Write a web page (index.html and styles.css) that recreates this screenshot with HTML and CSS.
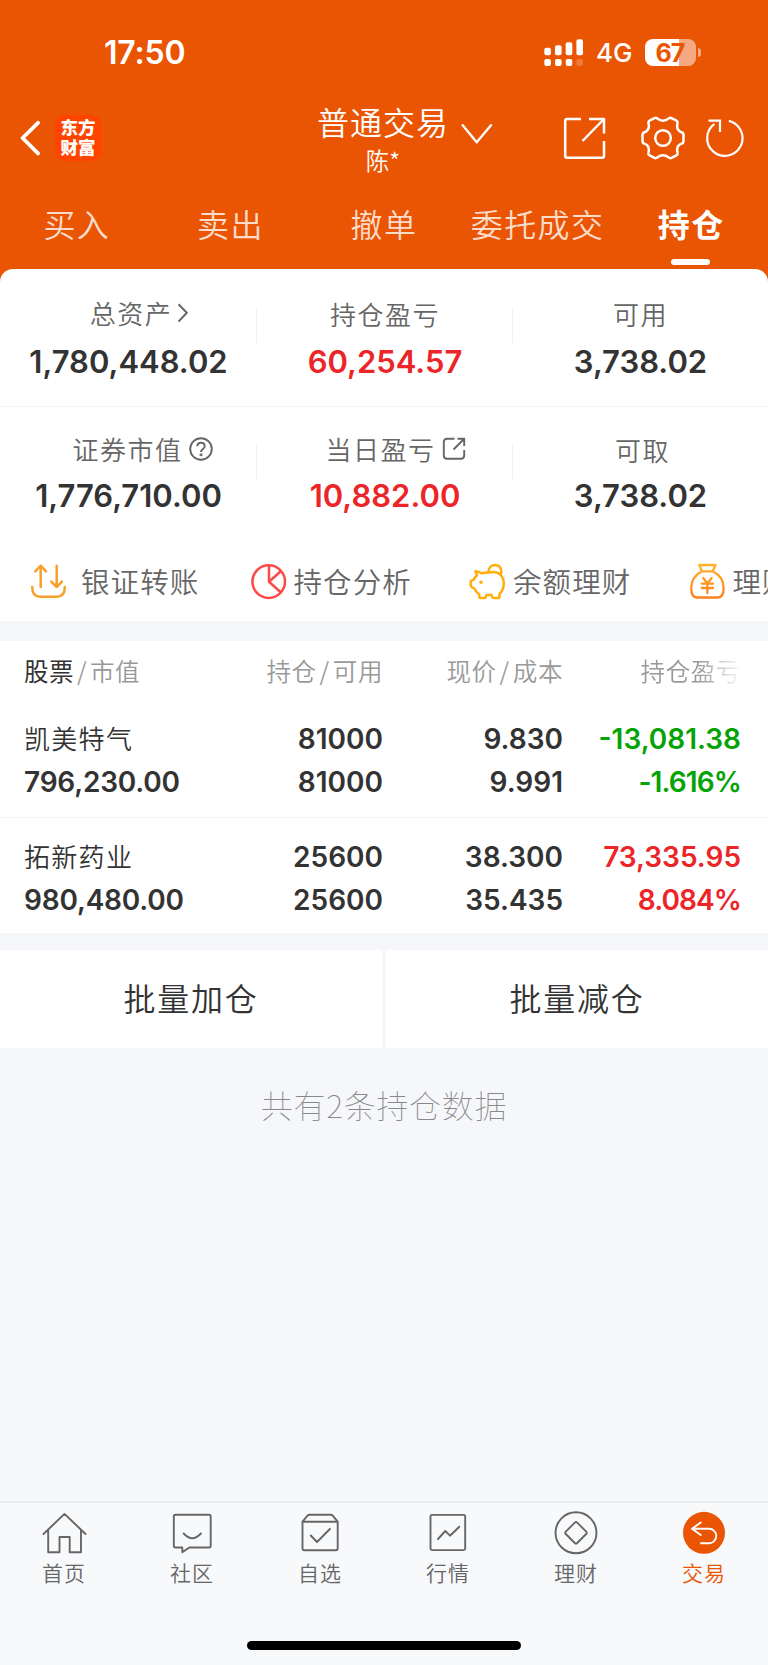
FILE: index.html
```html
<!DOCTYPE html>
<html lang="zh-CN">
<head>
<meta charset="utf-8">
<title>持仓</title>
<link rel="stylesheet" href="styles.css">
</head>
<body>
<div class="screen">
  <header class="top">
    <div class="status">
      <span class="time">17:50</span>
      <div class="status-right">
        <svg class="signal" width="40" height="28" viewBox="0 0 40 28" fill="#fff">
          <rect x="0.3" y="8.7" width="6.6" height="7.6" rx="2"/><rect x="11" y="6.2" width="6.6" height="10.1" rx="2"/><rect x="21.7" y="3.3" width="6.6" height="13" rx="2"/><rect x="32.4" y="0.3" width="6.6" height="16" rx="2"/>
          <rect x="0.3" y="20" width="6.6" height="7" rx="2"/><rect x="11" y="20" width="6.6" height="7" rx="2"/><rect x="21.7" y="20" width="6.6" height="7" rx="2"/><rect x="32.4" y="20" width="6.6" height="7" rx="2" opacity=".22"/>
        </svg>
        <span class="network">4G</span>
        <span class="battery"><span class="battery-body">67</span><span class="battery-nub"></span></span>
      </div>
    </div>
    <div class="titlebar">
      <div class="title-left">
        <svg width="20" height="36" viewBox="0 0 20 36" fill="none" stroke="#fff" stroke-width="3.8" stroke-linecap="round" stroke-linejoin="round"><path d="M18 2.8 2.6 18 18 33.4"/></svg>
        <div class="logo"><span>东方</span><span>财富</span></div>
      </div>
      <div class="title-center">
        <div class="title-text"><span class="title-main">普通交易</span><span class="title-sub">陈*</span></div>
        <svg class="title-caret" width="32" height="20" viewBox="0 0 32 20" fill="none" stroke="#fff" stroke-width="2.4" stroke-linecap="round" stroke-linejoin="round"><path d="M1.700 1.200 15.700 18.200 30 1.200"/></svg>
      </div>
      <div class="title-actions">
        <svg width="44" height="44" viewBox="0 0 44 44" fill="none" stroke="#fff" stroke-width="2.5" stroke-linejoin="round"><path d="M18 3H4.200Q2.200 3 2.200 5V39.700Q2.200 41.700 4.200 41.700H39Q41 41.700 41 39.700V25"/><path d="M26 3H41V17.500M41 3 19.500 25"/></svg>
        <svg class="gear" width="44" height="44" viewBox="-22 -22 44 44" fill="none" stroke="#fff" stroke-width="2.500" stroke-linejoin="round"><path d="M20.500 -3.500V3.500Q20.300 5.300 18.500 5.700C14 7.500 13.500 10.500 14.500 14.500Q15 16.300 13.500 17.300L8.500 19.900Q7 20.600 5.700 19.400Q0 15 -5.700 19.400Q-7 20.600 -8.500 19.900L-13.500 17.300Q-15 16.300 -14.500 14.500C-13.500 10.500 -14 7.500 -18.500 5.700Q-20.300 5.300 -20.500 3.500V-3.500Q-20.300 -5.300 -18.500 -5.700C-14 -7.500 -13.500 -10.500 -14.500 -14.500Q-15 -16.300 -13.500 -17.300L-8.500 -19.900Q-7 -20.600 -5.700 -19.400Q0 -15 5.700 -19.400Q7 -20.600 8.500 -19.900L13.500 -17.300Q15 -16.300 14.500 -14.500C13.500 -10.500 14 -7.500 18.500 -5.700Q20.300 -5.300 20.500 -3.500Z"/><circle r="7.800"/></svg>
        <svg class="refresh" width="44" height="44" viewBox="-22 -22 44 44" fill="none" stroke="#fff" stroke-width="2.200"><path d="M3.800 -17.100A17.700 17.700 0 1 1 -10.500 -14.200"/><path d="M-16.500 -17.300H-5V-6"/></svg>
      </div>
    </div>
    <nav class="tabs">
      <span class="tab">买入</span><span class="tab">卖出</span><span class="tab">撤单</span><span class="tab">委托成交</span><span class="tab tab-active">持仓</span>
    </nav>
  </header>

  <main>
    <section class="summary">
      <div class="stats stats-first">
        <div class="stat"><div class="label label-asset">总资产<svg width="12" height="20" viewBox="0 0 12 20" fill="none" stroke="#666" stroke-width="2"><path d="M1.500 1.200 9.800 9.800 1.500 18.600"/></svg></div><div class="value">1,780,448.02</div></div>
        <div class="stat"><div class="label label-plain">持仓盈亏</div><div class="value red">60,254.57</div></div>
        <div class="stat"><div class="label label-plain">可用</div><div class="value">3,738.02</div></div>
      </div>
      <div class="stats stats-second">
        <div class="stat"><div class="label label-market">证券市值<svg width="24" height="24" viewBox="0 0 24 24" fill="none" stroke="#666" stroke-width="1.900"><circle cx="12" cy="12" r="10.800"/><path d="M8.300 9.300C8.300 4.500 15.700 4.600 15.700 9.200C15.700 12 12 12 12 15"/><circle cx="12" cy="17.800" r=".6"/></svg></div><div class="value">1,776,710.00</div></div>
        <div class="stat"><div class="label label-today">当日盈亏<svg width="24" height="24" viewBox="0 0 24 24" fill="none" stroke="#666" stroke-width="1.900"><path d="M12.500 1.800H5Q1.800 1.800 1.800 5V18.500Q1.800 21.700 5 21.700H19Q22.200 21.700 22.200 18.500V13"/><path d="M15.500 1.800H22.200V9M22 2 11.500 12.500"/></svg></div><div class="value red">10,882.00</div></div>
        <div class="stat"><div class="label label-plain label-cash">可取</div><div class="value">3,738.02</div></div>
      </div>
      <div class="tools">
        <div class="tool tool-transfer"><svg width="38" height="38" viewBox="0 0 38 38" fill="none" stroke="#f7a02c" stroke-width="2.500" stroke-linecap="round" stroke-linejoin="round"><path d="M10.700 24V2.700M5.300 8.300 10.700 2.700 16 8.300M26.700 2.700V24M21.300 18.700 26.700 24 32 18.700M2.200 24C2.200 30.500 5 33.700 10 33.700H27C32.500 33.700 34.800 30.500 34.800 24"/></svg>银证转账</div>
        <div class="tool"><svg width="38" height="38" viewBox="0 0 38 38" fill="none" stroke="#ff4848" stroke-width="2.500" stroke-linejoin="round"><circle cx="18.700" cy="18.600" r="16.300"/><path d="M19 2.500V18.700L30.700 29.300M19 18.700 30.700 8.300"/></svg>持仓分析</div>
        <div class="tool"><svg width="38" height="38" viewBox="0 0 38 38" fill="none" stroke="#ffae0a" stroke-width="2.500" stroke-linejoin="round"><path d="M6.500 8.200Q10 8.500 12.500 10.300C17 9 19 9.600 22.500 9.200C30 8.300 34.800 13.500 34.800 20.500C34.800 26 32.500 29 30.500 31V33.500Q30.300 35 28.500 35H25Q23.300 35 23 33.500L22.600 32H17.400L17 33.500Q16.700 35 15 35H11.800Q10.300 35 10.300 33.500V31.500Q6.500 28.500 5.500 25.700L2.700 24Q1.700 23.400 1.700 22.200V19Q1.700 17.800 2.800 17.400L5 16.500Q5.600 14 8 12.500Z"/><path d="M19.200 9.300C20 -0.800 32.800 0.300 32.300 8.500Q32.200 10.500 31.300 12"/><circle cx="12" cy="19.300" r="1.700" fill="#ffae0a" stroke="none"/></svg>余额理财</div>
        <div class="tool"><svg width="38" height="38" viewBox="0 0 38 38" fill="none" stroke="url(#bag)" stroke-width="2.300" stroke-linejoin="round" stroke-linecap="round"><defs><linearGradient id="bag" gradientUnits="userSpaceOnUse" x1="0" y1="0" x2="0" y2="36"><stop offset="0" stop-color="#ffb52e"/><stop offset="1" stop-color="#ff7d1a"/></linearGradient></defs><path d="M10.200 2H26.500L23.700 8.300H13ZM13 8.300C6 12 2.200 18.500 2.200 25C2.200 31 3.500 34.500 8 34.500H29C33.500 34.500 34.600 31 34.600 25C34.600 18.500 31 12 23.700 8.300"/><path d="M14.300 15 18.400 20.500 22.600 15M18.400 20.500V30M12.800 20.700H24M12.800 25H24"/></svg>理财</div>
      </div>
    </section>

    <section class="holdings">
      <div class="row head"><div class="c1"><b>股票</b><i>/</i>市值</div><div>持仓<i>/</i>可用</div><div>现价<i>/</i>成本</div><div class="fade">持仓盈亏</div></div>
      <div class="row item">
        <div class="c1"><span class="name">凯美特气</span><span>796,230.00</span></div>
        <div class="qty"><span>81000</span><span>81000</span></div>
        <div><span>9.830</span><span>9.991</span></div>
        <div class="green"><span>-13,081.38</span><span class="pct">-1.616%</span></div>
      </div>
      <div class="row item">
        <div class="c1"><span class="name">拓新药业</span><span>980,480.00</span></div>
        <div class="qty"><span>25600</span><span>25600</span></div>
        <div><span>38.300</span><span>35.435</span></div>
        <div class="red"><span>73,335.95</span><span class="pct">8.084%</span></div>
      </div>
    </section>

    <div class="batch"><button>批量加仓</button><button>批量减仓</button></div>
    <p class="note">共有2条持仓数据</p>
  </main>

  <footer class="bottom">
    <nav class="dock">
      <div class="dock-item"><svg width="48" height="48" viewBox="0 0 48 48"><path d="M3.500 25 24.500 4.900 45.500 25M8.200 21V43.300H19.500V28H29.700V43.300H41V21"/></svg>首页</div>
      <div class="dock-item"><svg width="48" height="48" viewBox="0 0 48 48"><path d="M7.500 5.700H41Q42.700 5.700 42.700 7.400V36.800Q42.700 38.500 41 38.500H21.300L14.300 43.300V38.500H7.500Q5.800 38.500 5.800 36.800V7.400Q5.800 5.700 7.500 5.700ZM15.700 24.500Q24.300 34 32.900 24.500"/></svg>社区</div>
      <div class="dock-item"><svg width="48" height="48" viewBox="0 0 48 48"><path d="M6.500 12.700 11.500 6.700Q12.300 5.700 13.500 5.700H34.700Q35.900 5.700 36.700 6.700L41.700 12.700V39.300Q41.700 41.300 39.700 41.300H8.500Q6.500 41.300 6.500 39.300ZM6.500 12.700H41.700M14.800 26.500 21 33 33.900 20"/></svg>自选</div>
      <div class="dock-item"><svg width="48" height="48" viewBox="0 0 48 48"><rect x="6.500" y="5.900" width="34.700" height="35.200" rx="1.500"/><path d="M14 30 21.300 22 26 26.700 35.300 17.700"/></svg>行情</div>
      <div class="dock-item"><svg width="48" height="48" viewBox="0 0 48 48"><circle cx="24" cy="23.800" r="20.500"/><path d="M22.800 13.600Q24 12.400 25.200 13.600L34.200 22.600Q35.400 23.800 34.200 25L25.200 34Q24 35.200 22.800 34L13.800 25Q12.600 23.800 13.800 22.600Z"/></svg>理财</div>
      <div class="dock-item dock-active"><svg width="48" height="48" viewBox="0 0 48 48"><circle cx="24" cy="23.800" r="21" fill="#ea5504" stroke="none"/><path stroke="#fff" d="M20.800 13.500 12 19.700 20.800 26M12 19.700H29A7.200 7.200 0 0 1 29 34.300H21"/></svg>交易</div>
    </nav>
    <div class="home-indicator"></div>
  </footer>
</div>
</body>
</html>
```
FILE: styles.css
```css
* { box-sizing: border-box; }
body { margin: 0; background: #f6f7fa; font-family: "Noto Sans CJK SC", sans-serif; color: #333; }
svg { display: block; flex: none; }
.screen { width: 768px; height: 1665px; display: flex; flex-direction: column; overflow: hidden; }
.red { color: #eb2528; }
.green { color: #05a305; }

/* Header */
.top { height: 269px; flex: none; background: #ea5504; color: #fff; }
.status { height: 105px; padding: 0 67px 0 104px; display: flex; justify-content: space-between; align-items: center; font-family: Inter, sans-serif; }
.time { font-size: 32px; font-weight: 600; line-height: 40px; letter-spacing: -0.2px; }
.status-right { display: flex; align-items: center; }
.signal { margin-right: 12px; }
.network { width: 49px; font-size: 26px; font-weight: 500; line-height: 30px; padding-top: 1px; }
.battery { display: flex; align-items: center; gap: 2px; }
.battery-body { width: 51px; height: 27px; border-radius: 8px; background: linear-gradient(90deg, #fff 34px, #f5a982 34px); color: #ea5504; font-size: 25px; font-weight: 700; line-height: 28px; text-align: center; letter-spacing: -1px; padding-right: 1px; }
.battery-nub { width: 3px; height: 9px; border-radius: 0 4px 4px 0; background: #f5a982; }
.titlebar { height: 80px; display: grid; grid-template-columns: 317px 1fr 205px; }
.title-left { display: flex; align-items: center; gap: 15px; padding: 0 0 14px 20px; }
.logo { width: 46px; height: 46px; border-radius: 9px; background: #ff4400; display: flex; flex-direction: column; align-items: center; justify-content: center; font-size: 17.500px; font-weight: 900; line-height: 20px; padding-bottom: 2px; }
.title-center { display: flex; gap: 12px; }
.title-text { display: flex; flex-direction: column; align-items: center; margin-top: -2px; }
.title-main { font-size: 32px; line-height: 36px; letter-spacing: 1px; font-weight: 350; }
.title-sub { font-size: 23.500px; line-height: 34px; padding-top: 4px; font-weight: 350; }
.title-caret { margin-top: 19px; }
.title-actions { display: flex; align-items: flex-start; padding-top: 11px; }
.gear { margin-left: 34px; }
.refresh { margin-left: 18px; }
.tabs { height: 84px; display: grid; grid-template-columns: repeat(5, 1fr); }
.tab { position: relative; text-align: center; font-size: 32px; line-height: 76px; letter-spacing: 1.400px; font-weight: 350; color: #fbdccb; }
.tab-active { color: #fff; font-weight: 700; }
.tab-active::after { content: ""; position: absolute; left: 57px; top: 74px; width: 39px; height: 6px; border-radius: 3px; background: #fff; }

/* Account summary */
main { flex: 1; background: linear-gradient(#ea5504 20px, #f6f7fa 20px); }
.summary { height: 352px; background: #fff; border-radius: 13px 13px 0 0; overflow: hidden; }
.stats { display: grid; grid-template-columns: 257px 256px 255px; }
.stats-first { height: 138px; padding-top: 23px; border-bottom: 1px solid #f3f3f5; }
.stats-second { height: 120px; padding-top: 21px; }
.stat { height: 92px; text-align: center; background: linear-gradient(#efeff1, #efeff1) right 17px / 1px 34px no-repeat; }
.stat:last-child { background: none; }
.label { display: flex; align-items: center; justify-content: center; height: 40px; font-size: 26px; line-height: 40px; letter-spacing: 1.500px; font-weight: 350; color: #666; padding-top: 1px; }
.label-asset { gap: 5px; padding-left: 22px; }
.label-market { gap: 6px; padding-left: 28px; padding-top: 2px; }
.label-today { gap: 6px; padding-left: 21px; padding-top: 2px; }
.label-plain { padding-top: 4px; }
.label-cash { padding-left: 4px; }
.value { font-family: Inter, sans-serif; font-size: 31px; font-weight: 600; line-height: 40px; padding-top: 10px; height: 50px; }
.stats-second .value { padding-top: 8px; }
.tools { display: flex; height: 94px; padding: 10px 0 0 30px; }
.tool { flex: none; width: 219.500px; height: 90px; display: flex; align-items: flex-start; gap: 6px; padding-top: 26px; font-size: 28.500px; line-height: 36px; letter-spacing: 1.100px; font-weight: 350; color: #666; white-space: nowrap; }
.tool-transfer { gap: 13px; }

/* Holdings table */
.holdings { margin-top: 20px; height: 292px; background: #fff; }
.row { display: grid; grid-template-columns: 190px 169px 180px 178px; padding: 0 27px 0 24px; text-align: right; }
.head { height: 76px; font-size: 24.500px; line-height: 60px; font-weight: 350; letter-spacing: .6px; color: #999; }
.head b { font-weight: 400; color: #333; }
.head i { font-style: normal; padding: 0 3px; }
.fade { -webkit-mask-image: linear-gradient(90deg, #000 135px, transparent 180px); mask-image: linear-gradient(90deg, #000 135px, transparent 180px); }
.c1 { text-align: left; letter-spacing: -0.2px; }
.head .c1 { letter-spacing: .5px; }
.item { height: 101px; padding: 1px 26px 0 24px; font-family: Inter, sans-serif; font-size: 28px; font-weight: 600; line-height: 43px; border-bottom: 1px solid #f3f3f5; }
.item + .item { height: 115px; padding-top: 18px; border-bottom: 0; }
.item span { display: block; }
.item .name { height: 43px; margin-top: -2px; margin-bottom: 2px; font-family: "Noto Sans CJK SC", sans-serif; font-size: 26px; font-weight: 350; letter-spacing: 1.300px; }
.item .pct { letter-spacing: -0.9px; }

/* Batch actions */
.batch { margin-top: 17px; height: 98px; display: grid; grid-template-columns: 1fr 1fr; gap: 4px; }
.batch button { border: 0; padding: 0 0 3px; background: #fff; font-family: inherit; font-size: 32px; font-weight: 350; letter-spacing: 1.800px; line-height: 95px; color: #333; }
.note { margin: 36px 0 0; text-align: center; font-size: 32px; line-height: 40px; letter-spacing: .7px; font-weight: 100; color: #888; }

/* Bottom navigation */
.bottom { height: 164px; flex: none; background: #f8f9fb; border-top: 2px solid #ebecee; display: flex; flex-direction: column; align-items: center; }
.dock { width: 768px; height: 138px; display: grid; grid-template-columns: repeat(6, 1fr); padding-top: 6px; }
.dock-item { display: flex; flex-direction: column; align-items: center; font-size: 21px; line-height: 30px; letter-spacing: 1px; font-weight: 350; color: #666; }
.dock-item svg { fill: none; stroke: #666; stroke-width: 1.900; stroke-linejoin: round; stroke-linecap: round; }
.dock-active { color: #ea5504; }
.home-indicator { width: 274px; height: 9px; border-radius: 5px; background: #000; }
```
